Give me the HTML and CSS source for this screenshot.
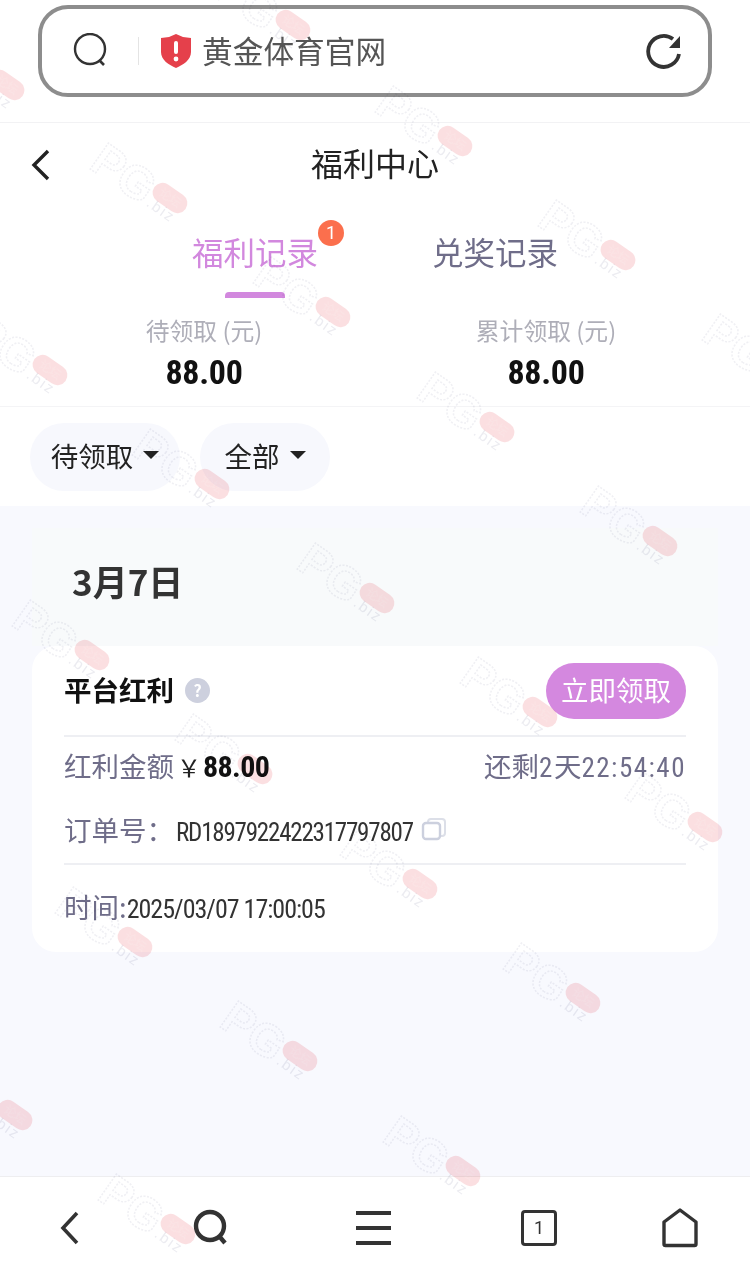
FILE: index.html
```html
<!DOCTYPE html>
<html lang="zh-CN">
<head>
    <meta charset="UTF-8">
    <title>福利中心</title>
    <link rel="stylesheet" href="styles.css">
</head>
<body>
    <div class="phone">
        <!-- browser address bar -->
        <div class="addr-wrap">
            <div class="addr">
                <svg class="addr-search" width="36" height="36" viewBox="0 0 36 36"><circle cx="17" cy="16" r="15" fill="none" stroke="#333" stroke-width="2.4"/><path d="M26 27l5 5" stroke="#333" stroke-width="2.6" fill="none"/></svg>
                <span class="addr-line"></span>
                <svg class="shield" width="32" height="36" viewBox="0 0 32 36"><path d="M16 1l7 3 8 1v14c0 8-8 13-15 16C9 32 1 27 1 19V5l8-1z" fill="#e5404b"/><rect x="14" y="8" width="4" height="13" rx="2" fill="#fff"/><circle cx="16" cy="26" r="2.4" fill="#fff"/></svg>
                <span class="addr-text">黄金体育官网</span>
                <svg class="addr-reload" width="36" height="36" viewBox="0 0 36 36"><path d="M33 21A15.500 15.500 0 1 1 27 6" fill="none" stroke="#333" stroke-width="3.8"/><path d="M34 3v12H23z" fill="#333"/></svg>
            </div>
        </div>

        <header class="title-bar">
            <svg class="back" width="20" height="32" viewBox="0 0 20 32"><path d="M17 2L3 16l14 14" fill="none" stroke="#222" stroke-width="3.4"/></svg>
            <h1>福利中心</h1>
        </header>

        <div class="tabs">
            <div class="tab active">福利记录<span class="badge">1</span></div>
            <div class="tab">兑奖记录</div>
        </div>

        <div class="totals">
            <div class="total">
                <div class="total-label">待领取 (元)</div>
                <div class="total-num"><span class="narrow">88.00</span></div>
            </div>
            <div class="total">
                <div class="total-label">累计领取 (元)</div>
                <div class="total-num"><span class="narrow">88.00</span></div>
            </div>
        </div>

        <div class="filters">
            <div class="pill pill-status">待领取<i class="caret"></i></div>
            <div class="pill pill-type">全部<i class="caret"></i></div>
        </div>

        <main class="content">
            <div class="date">3月7日</div>
            <section class="card">
                <div class="card-top">
                    <div class="card-title">平台红利<span class="help">?</span></div>
                    <button class="claim">立即领取</button>
                </div>
                <div class="row row-amount">
                    <div class="muted">红利金额<span class="yen">￥</span><b class="narrow">88.00</b></div>
                    <div class="muted">还剩<span class="narrow clock">2</span>天<span class="narrow clock">22:54:40</span></div>
                </div>
                <div class="row row-order">
                    <div class="muted">订单号：<span class="narrow dark">RD1897922422317797807</span></div>
                    <svg class="copy" width="26" height="24" viewBox="0 0 26 24"><rect x="7" y="2" width="17" height="17" rx="3" fill="none" stroke="#dcdfe8" stroke-width="2"/><rect x="2" y="6" width="17" height="16" rx="3" fill="#fff" stroke="#ccd0de" stroke-width="2.4"/></svg>
                </div>
                <div class="row row-time">
                    <div class="muted">时间:<span class="narrow dark">2025/03/07 17:00:05</span></div>
                </div>
            </section>
        </main>

        <!-- browser toolbar -->
        <nav class="toolbar">
            <svg width="36" height="40" viewBox="0 0 36 40"><path d="M26 5L12 20l14 15" fill="none" stroke="#333" stroke-width="3.6"/></svg>
            <svg width="40" height="40" viewBox="0 0 40 40"><circle cx="19" cy="18" r="14" fill="none" stroke="#333" stroke-width="4.4"/><path d="M28 28l6 7" stroke="#333" stroke-width="4.4"/></svg>
            <svg width="40" height="40" viewBox="0 0 40 40"><path d="M2 5h35M2 20h35M2 35h35" stroke="#333" stroke-width="4"/></svg>
            <div class="tab-count">1</div>
            <svg width="40" height="40" viewBox="0 0 40 40"><path d="M4 14L20 2l16 12v22a1.500 1.500 0 0 1-1.500 1.500h-29A1.500 1.500 0 0 1 4 36z" fill="none" stroke="#333" stroke-width="3.4" stroke-linejoin="round"/></svg>
        </nav>

        <!-- forum watermark, repeated over the whole page -->
        <svg class="wm" width="750" height="1280" viewBox="0 0 750 1280">
            <defs>
                <g id="mark">
                    <g transform="rotate(35)">
                        <text class="wm-pg" x="-85" y="22">PG</text>
                        <text class="wm-biz" x="-16" y="20">.biz</text>
                        <rect class="wm-pill" x="-19" y="-10" width="38" height="20" rx="10"/>
                        <text class="wm-forum" x="0" y="4">论坛</text>
                    </g>
                </g>
            </defs>
            <use href="#mark" x="293" y="25"/>
            <use href="#mark" x="455" y="141"/>
            <use href="#mark" x="170" y="198"/>
            <use href="#mark" x="618" y="255"/>
            <use href="#mark" x="333" y="312"/>
            <use href="#mark" x="50" y="370"/>
            <use href="#mark" x="497" y="427"/>
            <use href="#mark" x="212" y="484"/>
            <use href="#mark" x="660" y="541"/>
            <use href="#mark" x="377" y="598"/>
            <use href="#mark" x="92" y="655"/>
            <use href="#mark" x="540" y="712"/>
            <use href="#mark" x="255" y="769"/>
            <use href="#mark" x="705" y="827"/>
            <use href="#mark" x="420" y="884"/>
            <use href="#mark" x="135" y="942"/>
            <use href="#mark" x="583" y="998"/>
            <use href="#mark" x="300" y="1056"/>
            <use href="#mark" x="15" y="1115"/>
            <use href="#mark" x="463" y="1171"/>
            <use href="#mark" x="178" y="1229"/>
            <use href="#mark" x="7" y="85"/>
            <use href="#mark" x="782" y="369"/>
        </svg>
    </div>
</body>
</html>
```
FILE: styles.css
```css
* {
    box-sizing: border-box;
}
html, body {
    margin: 0;
    padding: 0;
}
body {
    font-family: "Noto Sans CJK SC", "Noto Sans", sans-serif;
    color: #222;
}
.phone {
    position: relative;
    width: 750px;
    height: 1280px;
    background: #fff;
    overflow: hidden;
    display: flex;
    flex-direction: column;
}
.narrow {
    font-family: "Liberation Sans Narrow", "Roboto Condensed", Roboto, sans-serif;
    font-size: 25px;
    letter-spacing: -1.2px;
}

/* address bar */
.addr-wrap {
    height: 123px;
    padding: 5px 38px 0;
    border-bottom: 1px solid #f2f2f4;
}
.addr {
    height: 92px;
    border: 4px solid #8d8d8d;
    border-radius: 30px;
    display: flex;
    align-items: center;
    padding: 0 26px 0 31px;
}
.addr-line {
    width: 1px;
    height: 28px;
    background: #e4e4e4;
    margin: 0 21px 0 29px;
}
.shield {
    margin-right: 10px;
}
.addr-text {
    font-size: 30.700px;
    color: #555;
    flex: 1;
    margin-top: -3px;
}

/* page title */
.title-bar {
    height: 84px;
    position: relative;
    display: flex;
    align-items: center;
    justify-content: center;
}
.title-bar h1 {
    margin: -6px 0 0;
    font-size: 32px;
    font-weight: 400;
    color: #222;
}
.back {
    position: absolute;
    left: 31px;
    top: 26px;
}

/* tabs */
.tabs {
    height: 93px;
    display: flex;
    justify-content: center;
    gap: 114px;
}
.tab {
    position: relative;
    font-size: 31.500px;
    line-height: 40px;
    padding-top: 24px;
    width: 126px;
    height: 93px;
    white-space: nowrap;
    color: #6f6d89;
}
.tab.active {
    color: #d288de;
}
.tab.active::after {
    content: "";
    position: absolute;
    left: 33px;
    bottom: 2px;
    width: 60px;
    height: 6px;
    border-radius: 4px 4px 0 0;
    background: #d288de;
}
.badge {
    position: absolute;
    right: -26px;
    top: 13px;
    width: 26px;
    height: 26px;
    border-radius: 50%;
    background: #fb6f4d;
    color: #fff;
    font-family: Roboto, sans-serif;
    font-size: 18px;
    line-height: 26px;
    text-align: center;
}

/* totals */
.totals {
    height: 107px;
    display: flex;
    padding: 0 33px;
    border-bottom: 1px solid #f4f4f6;
}
.total {
    flex: 1;
    text-align: center;
}
.total-label {
    font-size: 23.800px;
    line-height: 30px;
    padding-top: 15px;
    color: #aeaeb8;
}
.total-num {
    line-height: 44px;
    padding-top: 5px;
    font-weight: 700;
    color: #111;
}
.total-num .narrow {
    font-size: 34px;
    letter-spacing: -0.3px;
}

/* filter pills */
.filters {
    height: 99px;
    display: flex;
    gap: 20px;
    padding: 16px 0 0 30px;
}
.pill {
    height: 68px;
    border-radius: 34px;
    background: #f7f8fd;
    display: flex;
    align-items: center;
    justify-content: center;
    gap: 10px;
    padding-bottom: 4px;
    font-size: 27.500px;
    color: #222;
}
.pill-status {
    width: 150px;
}
.pill-type {
    width: 130px;
}
.pill i {
    display: block;
}
.caret {
    width: 0;
    height: 0;
    border-left: 8px solid transparent;
    border-right: 8px solid transparent;
    border-top: 8px solid #222;
}

/* records */
.content {
    flex: 1;
    background: #f8f9fe;
    padding: 22px 32px 0;
}
.date {
    height: 118px;
    padding: 22px 0 0 40px;
    font-size: 35px;
    line-height: 62px;
    font-weight: 700;
    color: #333;
    background: #f8fafb;
}
.card {
    background: #fff;
    border-radius: 24px;
    height: 306px;
    padding: 0 32px;
}
.card-top {
    height: 91px;
    display: flex;
    align-items: center;
    justify-content: space-between;
    border-bottom: 2px solid #eeeff3;
}
.card-title {
    display: flex;
    align-items: center;
    margin-top: -4px;
    font-size: 27.500px;
    font-weight: 700;
    color: #111;
}
.help {
    width: 25px;
    height: 25px;
    margin: 4px 0 0 11px;
    border-radius: 50%;
    background: #cdd0de;
    color: #fff;
    font-size: 16px;
    line-height: 25px;
    text-align: center;
}
.claim {
    width: 140px;
    height: 56px;
    border: 0;
    border-radius: 28px;
    background: #d488df;
    color: #fff;
    font-family: inherit;
    font-size: 27.500px;
    padding: 0 0 3px;
}
.row {
    display: flex;
    align-items: center;
}
.muted {
    font-size: 27.500px;
    color: #6f6d89;
    white-space: nowrap;
}
.dark {
    color: #333;
}
.clock {
    font-size: 27px;
    letter-spacing: 1.500px;
    color: #6f6d89;
}
.row-amount {
    height: 60px;
    padding-bottom: 4px;
    justify-content: space-between;
}
.row-amount b {
    color: #111;
    font-size: 30px;
    letter-spacing: -0.6px;
}
.yen {
    color: #222;
    font-size: 24px;
    margin: 0 2px 0 3px;
}
.row-order {
    gap: 8px;
    border-bottom: 2px solid #eeeff3;
    height: 68px;
    padding-bottom: 2px;
}
.row-order .dark {
    margin-left: 2px;
}
.row-time {
    height: 84px;
    padding-bottom: 2px;
}
.row-time .narrow {
    font-size: 26px;
    letter-spacing: -1px;
}

/* bottom toolbar */
.toolbar {
    height: 104px;
    background: #fff;
    border-top: 1px solid #eeeef0;
    display: grid;
    grid-template-columns: 138px 146px 180px 150px 132px;
    justify-items: center;
    align-items: center;
    padding-bottom: 1px;
}
.tab-count {
    width: 36px;
    height: 36px;
    border: 3.500px solid #333;
    border-radius: 4px;
    font-family: Roboto, sans-serif;
    font-size: 18px;
    line-height: 29px;
    text-align: center;
    color: #333;
}

/* watermark, multiplied so it tints the page without washing out text */
.wm {
    position: absolute;
    left: 0;
    top: 0;
    pointer-events: none;
    mix-blend-mode: multiply;
}
.wm-pg {
    font-family: "Liberation Sans", sans-serif;
    font-size: 46px;
    font-weight: 700;
    fill: none;
    stroke: #f0f0f4;
    stroke-width: 1.500;
    stroke-dasharray: 2 1.500;
}
.wm-biz {
    font-family: "Liberation Sans", sans-serif;
    font-size: 15px;
    letter-spacing: 2px;
    fill: #ececf1;
}
.wm-pill {
    fill: #f7b8bc;
    opacity: 0.45;
}
.wm-forum {
    font-size: 12px;
    text-anchor: middle;
    fill: #fbe4e5;
}
```
